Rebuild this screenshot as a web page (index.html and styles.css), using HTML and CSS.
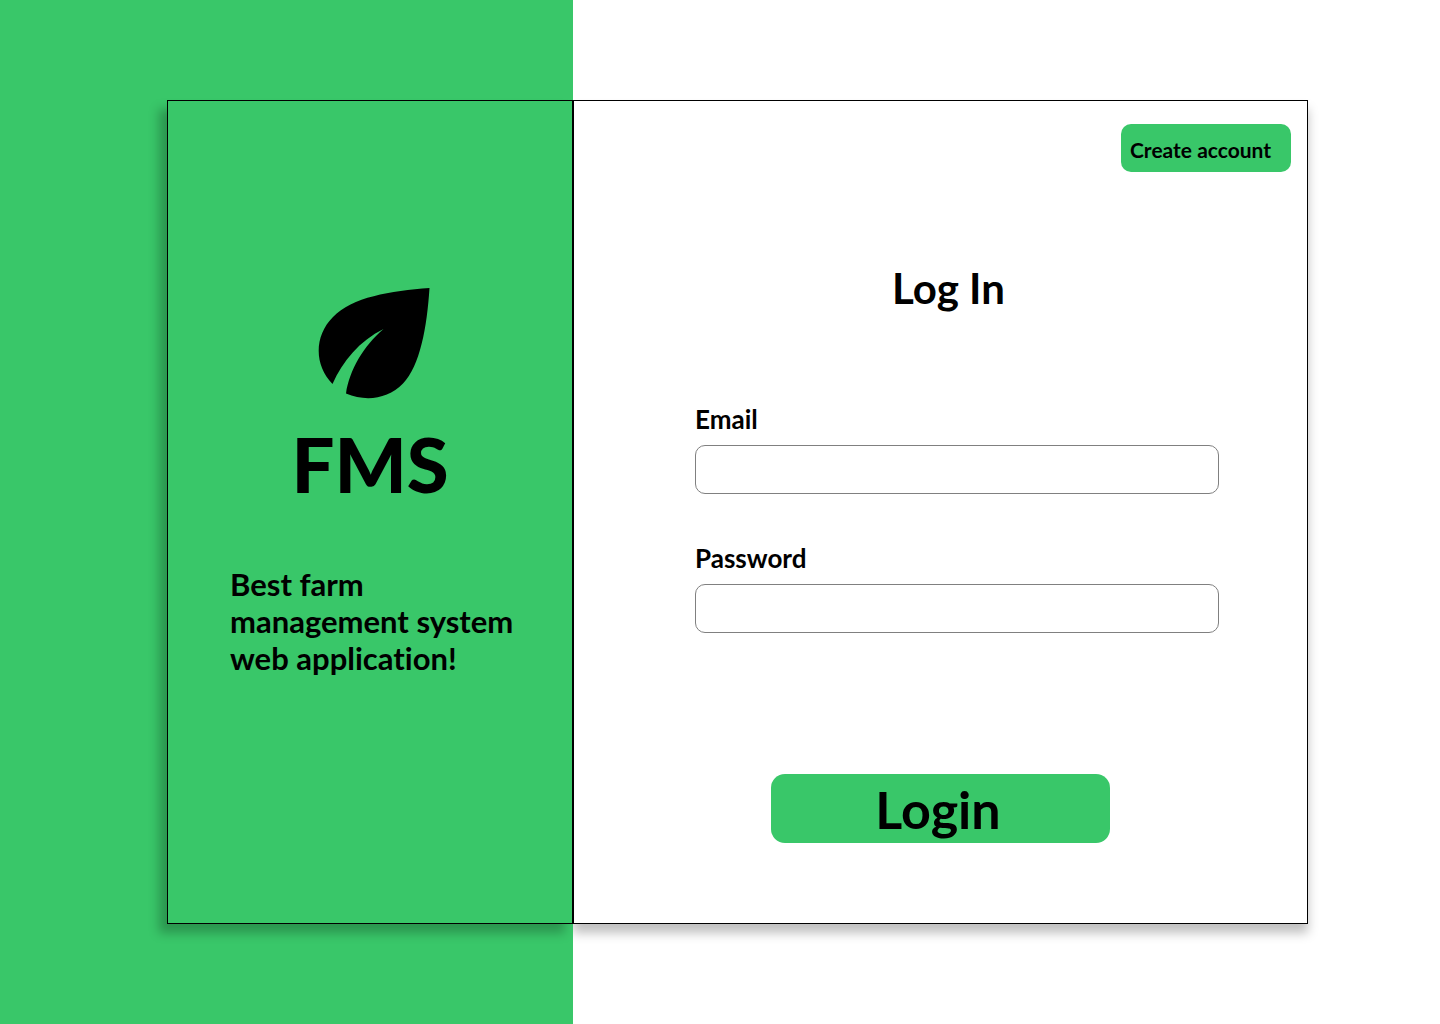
FILE: index.html
```html
<!DOCTYPE html>
<html lang="en">
<head>
  <meta charset="utf-8">
  <meta name="viewport" content="width=device-width, initial-scale=1">
  <title>FMS - Log In</title>
  <link rel="stylesheet" href="styles.css">
</head>
<body>
  <div class="page">
    <aside class="half half-brand">
      <section class="panel panel-brand">
        <svg class="leaf" viewBox="0 0 112 112" aria-hidden="true">
          <path d="M111.500 0C72.500 3 34 9 15 29C-4 48-4 77 14.500 96C24.500 73 41.500 53 65.500 41C45.500 58 31.500 82 28 105.500C48 114 70 111 85 95.500C102 78 109 39 111.500 0Z"/>
        </svg>
        <p class="brand-name">FMS</p>
        <p class="tagline">Best farm<br>management system<br>web application!</p>
      </section>
    </aside>
    <main class="half half-login">
      <section class="panel panel-login">
        <button type="button" class="button create-button">Create account</button>
        <h1 class="title">Log In</h1>
        <form class="form">
          <div class="field">
            <label class="label" for="email">Email</label>
            <input class="input" id="email" type="email">
          </div>
          <div class="field">
            <label class="label" for="password">Password</label>
            <input class="input" id="password" type="password">
          </div>
          <button type="submit" class="button login-button">Login</button>
        </form>
      </section>
    </main>
  </div>
</body>
</html>
```
FILE: styles.css
```css
* {
  box-sizing: border-box;
}

body {
  margin: 0;
  color: #000;
  background: #fff;
  font-family: Lato, "Liberation Sans", sans-serif;
  font-weight: 700;
  font-variant-ligatures: none;
}

p,
h1 {
  margin: 0;
}

.page {
  display: grid;
  grid-template-columns: 573fr 867fr;
  min-height: 100vh;
}

.half {
  display: grid;
  padding: 100px 0;
}

.half-brand {
  grid-template-columns: 167fr 406fr;
  background: #39c769;
  isolation: isolate;
  z-index: 1;
}

.half-login {
  grid-template-columns: 735fr 132fr;
}

.panel {
  display: flex;
  flex-direction: column;
  border: 1px solid #000;
}

.panel-brand {
  grid-column: 2;
  align-items: center;
  padding: 187px 48px 48px 48px;
  background: #39c769;
  box-shadow: -8px 9px 10px rgba(0, 0, 0, 0.25);
}

.leaf {
  width: 112px;
  height: 112px;
  margin-left: 8px;
}

.brand-name {
  margin-top: 18px;
  font-size: 76px;
  font-weight: 900;
  line-height: 92px;
}

.tagline {
  align-self: flex-start;
  margin-top: 56px;
  padding-left: 14px;
  font-size: 31px;
  line-height: 37px;
  white-space: nowrap;
}

.panel-login {
  padding: 23px 16px 80px;
  background: #fff;
  box-shadow: 0 9px 10px rgba(0, 0, 0, 0.25);
}

.button {
  border: 0;
  color: #000;
  background: #39c769;
  font: inherit;
  cursor: pointer;
}

.create-button {
  align-self: flex-end;
  width: 170px;
  height: 48px;
  padding: 2px 9px 0;
  border-radius: 10px;
  font-size: 21px;
  text-align: left;
  white-space: nowrap;
}

.title {
  margin-top: 91px;
  padding-left: 16px;
  font-size: 42px;
  line-height: 50px;
  text-align: center;
}

.form {
  display: flex;
  flex-direction: column;
  gap: 49px;
  margin-top: 91px;
  padding: 0 72px 0 105px;
}

.field {
  display: flex;
  flex-direction: column;
  gap: 10px;
}

.label {
  font-size: 26px;
  line-height: 31px;
}

.input {
  width: 100%;
  height: 49px;
  padding: 0 16px;
  border: 1px solid #808080;
  border-radius: 10px;
  background: #fff;
  font: inherit;
  font-size: 20px;
}

.login-button {
  align-self: center;
  width: 339px;
  height: 69px;
  margin-top: 92px;
  margin-right: 34px;
  padding: 2px 4px 0 0;
  border-radius: 14px;
  font-size: 52px;
  line-height: 67px;
}
```
